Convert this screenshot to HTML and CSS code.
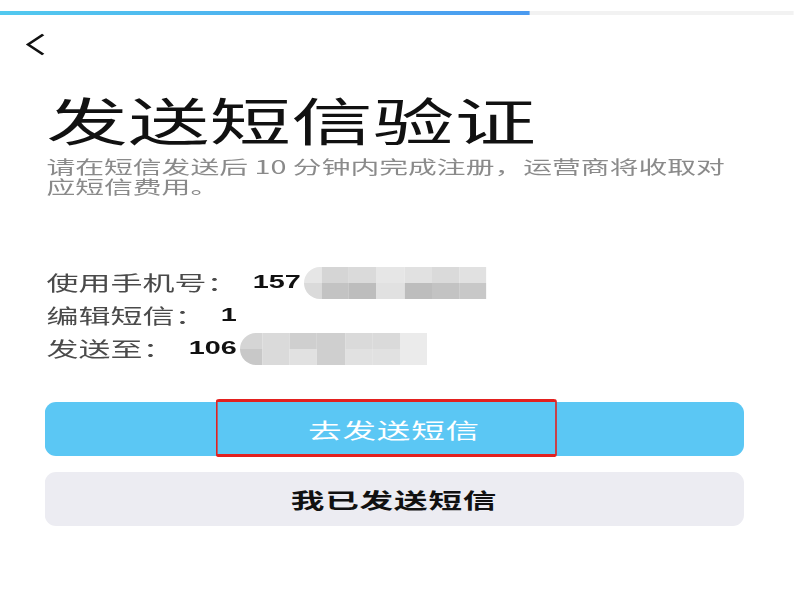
FILE: index.html
```html
<!DOCTYPE html>
<html lang="zh-CN">
<head>
  <meta charset="UTF-8">
  <meta name="viewport" content="width=device-width, initial-scale=1.0">
  <title>发送短信验证</title>
  <link rel="stylesheet" href="styles.css">
</head>
<body>
  <div class="screen">
    <!-- Step progress -->
    <div class="progress"><div class="progress-fill" style="width: 66.7%"></div></div>

    <button class="back-btn" aria-label="返回">
      <svg width="12" height="23" viewBox="0 0 12 23">
        <polyline points="11,1.5 1.5,11.5 11,21.5" fill="none" stroke="#111" stroke-width="2"/>
      </svg>
    </button>

    <main class="content">
      <h1 class="title">发送短信验证</h1>
      <p class="hint">请在短信发送后 10 分钟内完成注册，运营商将收取对应短信费用。</p>

      <div class="info">
        <div class="info-row">
          <span class="info-label">使用手机号：</span>
          <span class="info-value">157</span>
          <span class="mosaic mosaic-phone">
            <i class="s2"></i><i class="s5"></i><i class="s4"></i><i class="s2"></i><i class="s3"></i><i class="s4"></i><i class="s3"></i>
            <i class="s4"></i><i class="s8"></i><i class="s9"></i><i class="s3"></i><i class="s9"></i><i class="s8"></i><i class="s7"></i>
          </span>
        </div>
        <div class="info-row">
          <span class="info-label">编辑短信：</span>
          <span class="info-value">1</span>
        </div>
        <div class="info-row">
          <span class="info-label">发送至：</span>
          <span class="info-value">106</span>
          <span class="mosaic mosaic-dest">
            <i class="s5"></i><i class="s4"></i><i class="s6"></i><i class="s6"></i><i class="s4"></i><i class="s4"></i><i class="s1"></i>
            <i class="s7"></i><i class="s4"></i><i class="s3"></i><i class="s6"></i><i class="s3"></i><i class="s3"></i><i class="s1"></i>
          </span>
        </div>
      </div>
    </main>

    <div class="actions">
      <button class="btn btn-primary">去发送短信<span class="mark"></span></button>
      <button class="btn btn-secondary">我已发送短信</button>
    </div>
  </div>
</body>
</html>
```

FILE: styles.css
```css
/* General styles */
* {
  box-sizing: border-box;
}
body {
  margin: 0;
  background-color: #fff;
  font-family: "Noto Sans CJK SC", sans-serif;
  color: #111;
}

/* The screenshot is a phone screen stretched sideways */
.screen {
  width: 500px;
  transform: scaleX(1.6);
  transform-origin: 0 0;
}

/* Progress bar */
.progress {
  height: 4px;
  margin: 11px 4px 0 0;
  background-color: #f2f2f2;
}
.progress-fill {
  height: 100%;
  background: linear-gradient(90deg, #52c9ef, #4a9af0);
}

.back-btn {
  display: block;
  margin: 18px 0 0 16px;
  padding: 0;
  border: none;
  background: none;
  line-height: 0;
  cursor: pointer;
}

/* Main text */
.content {
  padding: 0 35px 0 29px;
}
.title {
  margin: 38px 0 0;
  font-size: 51px;
  font-weight: 400;
  line-height: 1;
}
.hint {
  margin: 11px 0 0;
  max-width: 430px;
  font-size: 18px;
  line-height: 20px;
  color: #8a8a8a;
}

/* Phone info rows */
.info {
  margin-top: 70px;
}
.info-row {
  display: flex;
  align-items: center;
  height: 33px;
}
.info-label {
  font-size: 20px;
  color: #4a4a4a;
}
.info-value {
  margin-left: 9px;
  font-family: "Liberation Sans", "Noto Sans CJK SC", sans-serif;
  font-size: 18px;
  font-weight: 700;
  color: #111;
}
.mosaic {
  display: grid;
  grid-template-rows: 16px 16px;
  margin-left: 2px;
  border-radius: 10px 0 0 10px / 16px 0 0 16px;
  overflow: hidden;
}
.mosaic-phone {
  grid-template-columns: 11px repeat(6, 17.2px);
}
.mosaic-dest {
  grid-template-columns: 14px repeat(6, 17.2px);
}
.s1 { background-color: #ebebeb; }
.s2 { background-color: #e6e6e6; }
.s3 { background-color: #e1e1e1; }
.s4 { background-color: #dadada; }
.s5 { background-color: #d5d5d5; }
.s6 { background-color: #cfcfcf; }
.s7 { background-color: #c8c8c8; }
.s8 { background-color: #c3c3c3; }
.s9 { background-color: #bdbdbd; }

/* Buttons */
.actions {
  display: flex;
  flex-direction: column;
  gap: 16px;
  padding: 37px 35px 0 27.5px;
}
.btn {
  position: relative;
  height: 54px;
  border: none;
  border-radius: 7px / 11px;
  font-family: inherit;
  font-size: 21px;
  letter-spacing: 0.5px;
  cursor: pointer;
}
.btn-primary {
  background-color: #5bc7f4;
  color: #fff;
}
.btn-secondary {
  background-color: #ececf2;
  color: #111;
  font-weight: 700;
}
/* red highlight drawn over the button */
.mark {
  position: absolute;
  left: 107.5px;
  top: -3px;
  width: 213px;
  height: 58px;
  border: solid #e3211f;
  border-width: 3px 1.8px;
  border-radius: 2px;
}
```
